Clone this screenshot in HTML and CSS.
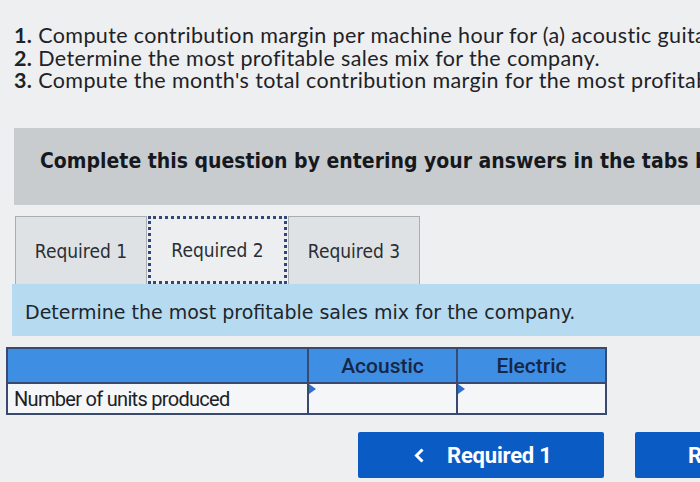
FILE: index.html
```html
<!DOCTYPE html>
<html>
<head>
<meta charset="utf-8">
<link rel="stylesheet" href="styles.css">
</head>
<body>
<div class="page">
  <ol class="tasks">
    <li><b>1.</b> Compute contribution margin per machine hour for (a) acoustic guitars and (b) electric guitars.</li>
    <li><b>2.</b> Determine the most profitable sales mix for the company.</li>
    <li><b>3.</b> Compute the month's total contribution margin for the most profitable sales mix.</li>
  </ol>

  <div class="banner">Complete this question by entering your answers in the tabs below.</div>

  <div class="tabs">
    <div class="tab">Required 1</div>
    <div class="tab active">Required 2</div>
    <div class="tab">Required 3</div>
  </div>

  <div class="prompt">Determine the most profitable sales mix for the company.</div>

  <table class="grid">
    <thead>
      <tr><th class="label"></th><th>Acoustic</th><th>Electric</th></tr>
    </thead>
    <tbody>
      <tr><td class="label">Number of units produced</td><td class="input"><span class="flag"></span></td><td class="input"><span class="flag"></span></td></tr>
    </tbody>
  </table>

  <div class="nav">
    <div class="btn prev"><svg class="chev" width="11" height="15" viewBox="0 0 11 15"><path d="M8.5 1.5 L2.5 7.5 L8.5 13.5" fill="none" stroke="#fff" stroke-width="3"/></svg><span>Required 1</span></div>
    <div class="btn next"><span>Required 3</span><svg class="chev" width="11" height="15" viewBox="0 0 11 15"><path d="M2.5 1.5 L8.5 7.5 L2.5 13.5" fill="none" stroke="#fff" stroke-width="3"/></svg></div>
  </div>
</div>
</body>
</html>
```

FILE: styles.css
```css
html, body {
  margin: 0;
  padding: 0;
  width: 700px;
  height: 482px;
  overflow: hidden;
  background: #edeff1;
}
.page {
  width: 700px;
  height: 482px;
  overflow: hidden;
  white-space: nowrap;
}
.tasks {
  list-style: none;
  margin: 0;
  padding: 24px 0 0 14px;
  font-family: Lato, "Open Sans", sans-serif;
  font-size: 21.5px;
  line-height: 22.5px;
  letter-spacing: 0.38px;
  color: #1f2226;
}
.tasks b { font-weight: 700; }
.banner {
  margin: 36.5px 0 0 14px;
  height: 77px;
  box-sizing: border-box;
  background: #c9ccce;
  padding: 21px 0 0 26px;
  font-family: "DejaVu Sans Condensed", "DejaVu Sans", sans-serif;
  font-weight: bold;
  font-size: 21px;
  color: #15191e;
}
.tabs {
  display: flex;
  margin: 11px 0 0 15px;
  height: 68px;
}
.tab {
  width: 132px;
  box-sizing: border-box;
  border: 1px solid #a9adb0;
  border-bottom: none;
  background: #dfe2e4;
  display: flex;
  align-items: center;
  justify-content: center;
  font-family: "DejaVu Sans Condensed", "DejaVu Sans", sans-serif;
  font-size: 19px;
  color: #2a2e33;
}
.tab + .tab { margin-left: 1px; }
.tab.active {
  width: 139px;
  background: #eceef0;
  border: 3px dotted #34457a;
}
.prompt {
  margin: 0 0 0 12px;
  height: 52px;
  box-sizing: border-box;
  background: #b6daef;
  padding: 17px 0 0 13px;
  font-family: "DejaVu Sans", sans-serif;
  font-size: 19px;
  color: #20252b;
}
.grid {
  margin: 11px 0 0 6px;
  border-collapse: collapse;
  font-family: Roboto, "Liberation Sans", sans-serif;
}
.grid th {
  background: #3e8ee4;
  height: 33px;
  padding: 0;
  border: 2px solid #3a4a6e;
  font-size: 21px;
  font-weight: 500;
  color: #172746;
  width: 147px;
}
.grid th.label { width: 299px; border-right: 1px solid #3a4a6e; }
.grid td {
  height: 29px;
  padding: 0;
  border: 2px solid #3a4a6e;
  background: #f4f6f7;
}
.grid td.label {
  padding-left: 6px;
  font-size: 20px;
  letter-spacing: -0.7px;
  color: #1d2126;
  text-align: left;
  border-width: 1px 1px 2px 2px;
}
.grid td.input { position: relative; }
.flag {
  position: absolute;
  left: 0;
  top: 0;
  width: 0;
  height: 0;
  border-left: 7px solid #2f6fd0;
  border-top: 5px solid transparent;
  border-bottom: 5px solid transparent;
}
.nav {
  display: flex;
  margin: 17px 0 0 358px;
  gap: 31px;
}
.btn {
  height: 46px;
  width: 246px;
  box-sizing: border-box;
  background: #0b5bc4;
  border-radius: 2px;
  color: #fff;
  font-family: Roboto, "Liberation Sans", sans-serif;
  font-weight: bold;
  font-size: 22px;
  letter-spacing: -0.2px;
  display: flex;
  align-items: center;
  gap: 22px;
  flex: none;
}
.btn.prev { padding-left: 56px; }
.btn.next { padding-left: 53px; }
.chev { flex: none; }
```
